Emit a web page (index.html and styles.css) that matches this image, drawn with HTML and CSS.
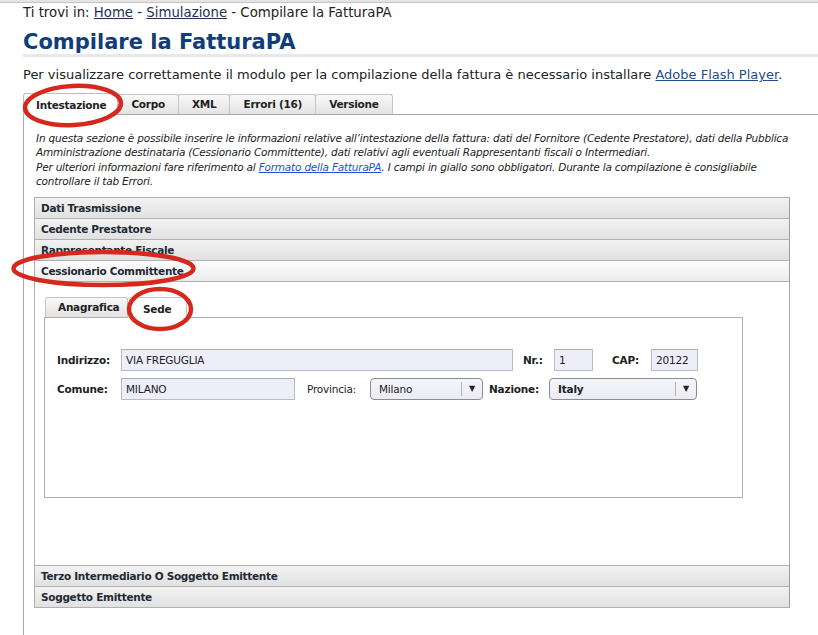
FILE: index.html
```html
<!DOCTYPE html>
<html lang="it">
<head>
<meta charset="utf-8">
<title>Compilare la FatturaPA</title>
<link rel="stylesheet" href="styles.css">
</head>
<body>
<div class="topbar"></div>
<div class="page">
  <div class="breadcrumb">Ti trovi in: <a href="#">Home</a> - <a href="#">Simulazione</a> - Compilare la FatturaPA</div>
  <h1 class="title">Compilare la FatturaPA</h1>
  <p class="notice">Per visualizzare correttamente il modulo per la compilazione della fattura è necessario installare <a href="#">Adobe Flash Player</a>.</p>

  <div class="tabs">
    <ul class="tablist">
      <li class="tab active">Intestazione</li>
      <li class="tab">Corpo</li>
      <li class="tab">XML</li>
      <li class="tab">Errori (16)</li>
      <li class="tab">Versione</li>
    </ul>
    <div class="tabpanel">
      <p class="desc">In questa sezione è possibile inserire le informazioni relative all’intestazione della fattura: dati del Fornitore (Cedente Prestatore), dati della Pubblica<br>Amministrazione destinataria (Cessionario Committente), dati relativi agli eventuali Rappresentanti fiscali o Intermediari.<br>Per ulteriori informazioni fare riferimento al <a href="#">Formato della FatturaPA</a>. I campi in giallo sono obbligatori. Durante la compilazione è consigliabile<br>controllare il tab Errori.</p>

      <div class="accordion">
        <div class="acc-header">Dati Trasmissione</div>
        <div class="acc-header">Cedente Prestatore</div>
        <div class="acc-header">Rappresentante Fiscale</div>
        <div class="acc-header open">Cessionario Committente</div>
        <div class="acc-content">
          <ul class="subtablist">
            <li class="subtab">Anagrafica</li>
            <li class="subtab active">Sede</li>
          </ul>
          <div class="subpanel">
            <div class="form-row">
              <label class="lbl w-ind">Indirizzo:</label>
              <span class="field w392">VIA FREGUGLIA</span>
              <label class="lbl w-nr">Nr.:</label>
              <span class="field w39">1</span>
              <label class="lbl w-cap">CAP:</label>
              <span class="field w47">20122</span>
            </div>
            <div class="form-row">
              <label class="lbl w-ind">Comune:</label>
              <span class="field w174">MILANO</span>
              <label class="lbl plain w-prov">Provincia:</label>
              <span class="select w113"><span class="sel-text">Milano</span><span class="sel-arrow">▼</span></span>
              <label class="lbl w-naz">Nazione:</label>
              <span class="select w148"><span class="sel-text bold">Italy</span><span class="sel-arrow">▼</span></span>
            </div>
          </div>
        </div>
        <div class="acc-header">Terzo Intermediario O Soggetto Emittente</div>
        <div class="acc-header">Soggetto Emittente</div>
      </div>
    </div>
  </div>
</div>

<svg class="annotations" width="818" height="635" viewBox="0 0 818 635" aria-hidden="true">
  <g fill="none" stroke="#d6291d" stroke-width="4.5">
    <ellipse cx="73" cy="105.5" rx="48" ry="19.5" transform="rotate(-3 73 105.5)"/>
    <ellipse cx="103.5" cy="268.5" rx="90" ry="16.5"/>
    <ellipse cx="160" cy="309" rx="31" ry="20"/>
  </g>
</svg>
</body>
</html>
```

FILE: styles.css
```css
html, body {
  margin: 0;
  padding: 0;
  background: #ffffff;
  overflow: hidden;
}
body {
  width: 818px;
  height: 635px;
  position: relative;
  font-family: "DejaVu Sans", Verdana, sans-serif;
  color: #222222;
}
.topbar {
  height: 2px;
  background: #e4e4e4;
  border-bottom: 1px solid #c4c4c4;
}
.page {
  padding-left: 23px;
}
.breadcrumb {
  font-size: 13.3px;
  line-height: 16px;
  padding-top: 2px;
}
.breadcrumb a {
  color: #1d3150;
  text-decoration: underline;
}
.title {
  margin: 9px 0 0 0;
  font-size: 21px;
  line-height: 24px;
  font-weight: bold;
  color: #103e7a;
  border-bottom: 3px solid #e8e8e8;
  padding-bottom: 0;
}
.notice {
  margin: 10px 0 0 0;
  font-size: 13px;
  line-height: 16px;
  white-space: nowrap;
}
.notice a {
  color: #1f4d8a;
  text-decoration: underline;
}
.tabs {
  margin-top: 10px;
}
.tablist {
  list-style: none;
  margin: 0;
  padding: 0;
  display: flex;
  align-items: flex-end;
  border-bottom: 1px solid #aaaaaa;
  height: 21px;
}
.tab {
  font-size: 10.5px;
  letter-spacing: -0.25px;
  font-weight: bold;
  color: #222;
  height: 20px;
  line-height: 19px;
  padding: 0 13px;
  border: 1px solid #c4c4c4;
  border-bottom: none;
  border-radius: 3px 3px 0 0;
  background: linear-gradient(#f8f8f8, #e3e3e3);
  margin-right: -1px;
  box-sizing: border-box;
}
.tab.active {
  background: #ffffff;
  height: 22px;
  line-height: 23px;
  margin-bottom: -1px;
  position: relative;
  border-color: #bdbdbd;
  padding: 0 11px 0 12px;
}
.tabpanel {
  border-left: 1px solid #aaaaaa;
  height: 540px;
  padding: 0 0 0 10px;
}
.desc {
  margin: 0;
  padding: 16px 0 0 2px;
  font-size: 10.5px;
  letter-spacing: -0.2px;
  line-height: 14.3px;
  font-style: italic;
  white-space: nowrap;
  color: #222;
}
.desc a {
  color: #1c4fd8;
  text-decoration: underline;
}
.accordion {
  margin-top: 9px;
  width: 756px;
}
.acc-header {
  height: 20px;
  line-height: 20px;
  padding-left: 6px;
  font-size: 10.5px;
  letter-spacing: -0.3px;
  font-weight: bold;
  color: #1e2a36;
  border: 1px solid #b0b0b0;
  border-right-color: #9c9c9c;
  border-top: none;
  background: linear-gradient(#f2f2f2, #e1e1e1);
}
.acc-header:first-child {
  border-top: 1px solid #b0b0b0;
}
.acc-header.open {
  background: linear-gradient(#fdfdfd, #ececec);
}
.acc-content {
  height: 284px;
  border-left: 1px solid #b0b0b0;
  border-right: 1px solid #a8a8a8;
  padding: 15px 0 0 9px;
  box-sizing: border-box;
  border-bottom: 1px solid #b0b0b0;
  background: #fff;
}
.subtablist {
  list-style: none;
  margin: 0;
  padding: 0 0 0 1px;
  display: flex;
  align-items: flex-end;
  height: 20px;
  width: 699px;
  box-sizing: border-box;
}
.subtab {
  font-size: 10.5px;
  letter-spacing: -0.25px;
  font-weight: bold;
  color: #222;
  height: 20px;
  line-height: 19px;
  padding: 0 12px;
  border: 1px solid #c4c4c4;
  border-bottom: none;
  border-radius: 3px 3px 0 0;
  background: linear-gradient(#f8f8f8, #e3e3e3);
  box-sizing: border-box;
}
.subtab:first-child {
  width: 83px;
}
.subtab.active {
  background: #fff;
  height: 21px;
  line-height: 22px;
  margin-bottom: -1px;
  padding: 0 15px;
  position: relative;
  border-left: none;
}
.subpanel {
  width: 699px;
  height: 181px;
  border: 1px solid #aab0b4;
  box-sizing: border-box;
  padding: 31px 0 0 12px;
}
.form-row {
  display: flex;
  align-items: center;
  height: 22px;
  margin-bottom: 7px;
}
.lbl {
  font-size: 10.5px;
  letter-spacing: -0.2px;
  font-weight: bold;
  color: #222;
  flex: none;
}
.lbl.plain {
  font-weight: normal;
}
.w-ind { width: 64px; }
.w-nr { width: 31px; margin-left: 10px; }
.w-cap { width: 39px; margin-left: 19px; }
.w-prov { width: 63px; margin-left: 12px; }
.w-naz { width: 60px; margin-left: 6px; }
.field {
  flex: none;
  height: 22px;
  line-height: 20px;
  box-sizing: border-box;
  border: 1px solid #b9bcc6;
  border-top-color: #a9acb6;
  background: #eeeef9;
  font-size: 10.5px;
  letter-spacing: -0.2px;
  color: #222;
  padding-left: 4px;
}
.w392 { width: 392px; }
.w39 { width: 39px; }
.w47 { width: 47px; }
.w174 { width: 174px; }
.select {
  flex: none;
  display: flex;
  align-items: center;
  height: 22px;
  box-sizing: border-box;
  border: 1px solid #8c8c8c;
  border-radius: 4px;
  background: linear-gradient(#f4f4fb, #ececf4);
  font-size: 10.5px;
  letter-spacing: -0.2px;
  color: #222;
}
.w113 { width: 113px; }
.w148 { width: 148px; }
.sel-text {
  flex: 1;
  padding-left: 8px;
}
.sel-text.bold {
  font-weight: bold;
}
.sel-arrow {
  width: 20px;
  height: 14px;
  line-height: 14px;
  border-left: 1px solid #b4b4b4;
  text-align: center;
  font-size: 8px;
  color: #222;
}
.annotations {
  position: absolute;
  left: 0;
  top: 0;
  pointer-events: none;
}
```
